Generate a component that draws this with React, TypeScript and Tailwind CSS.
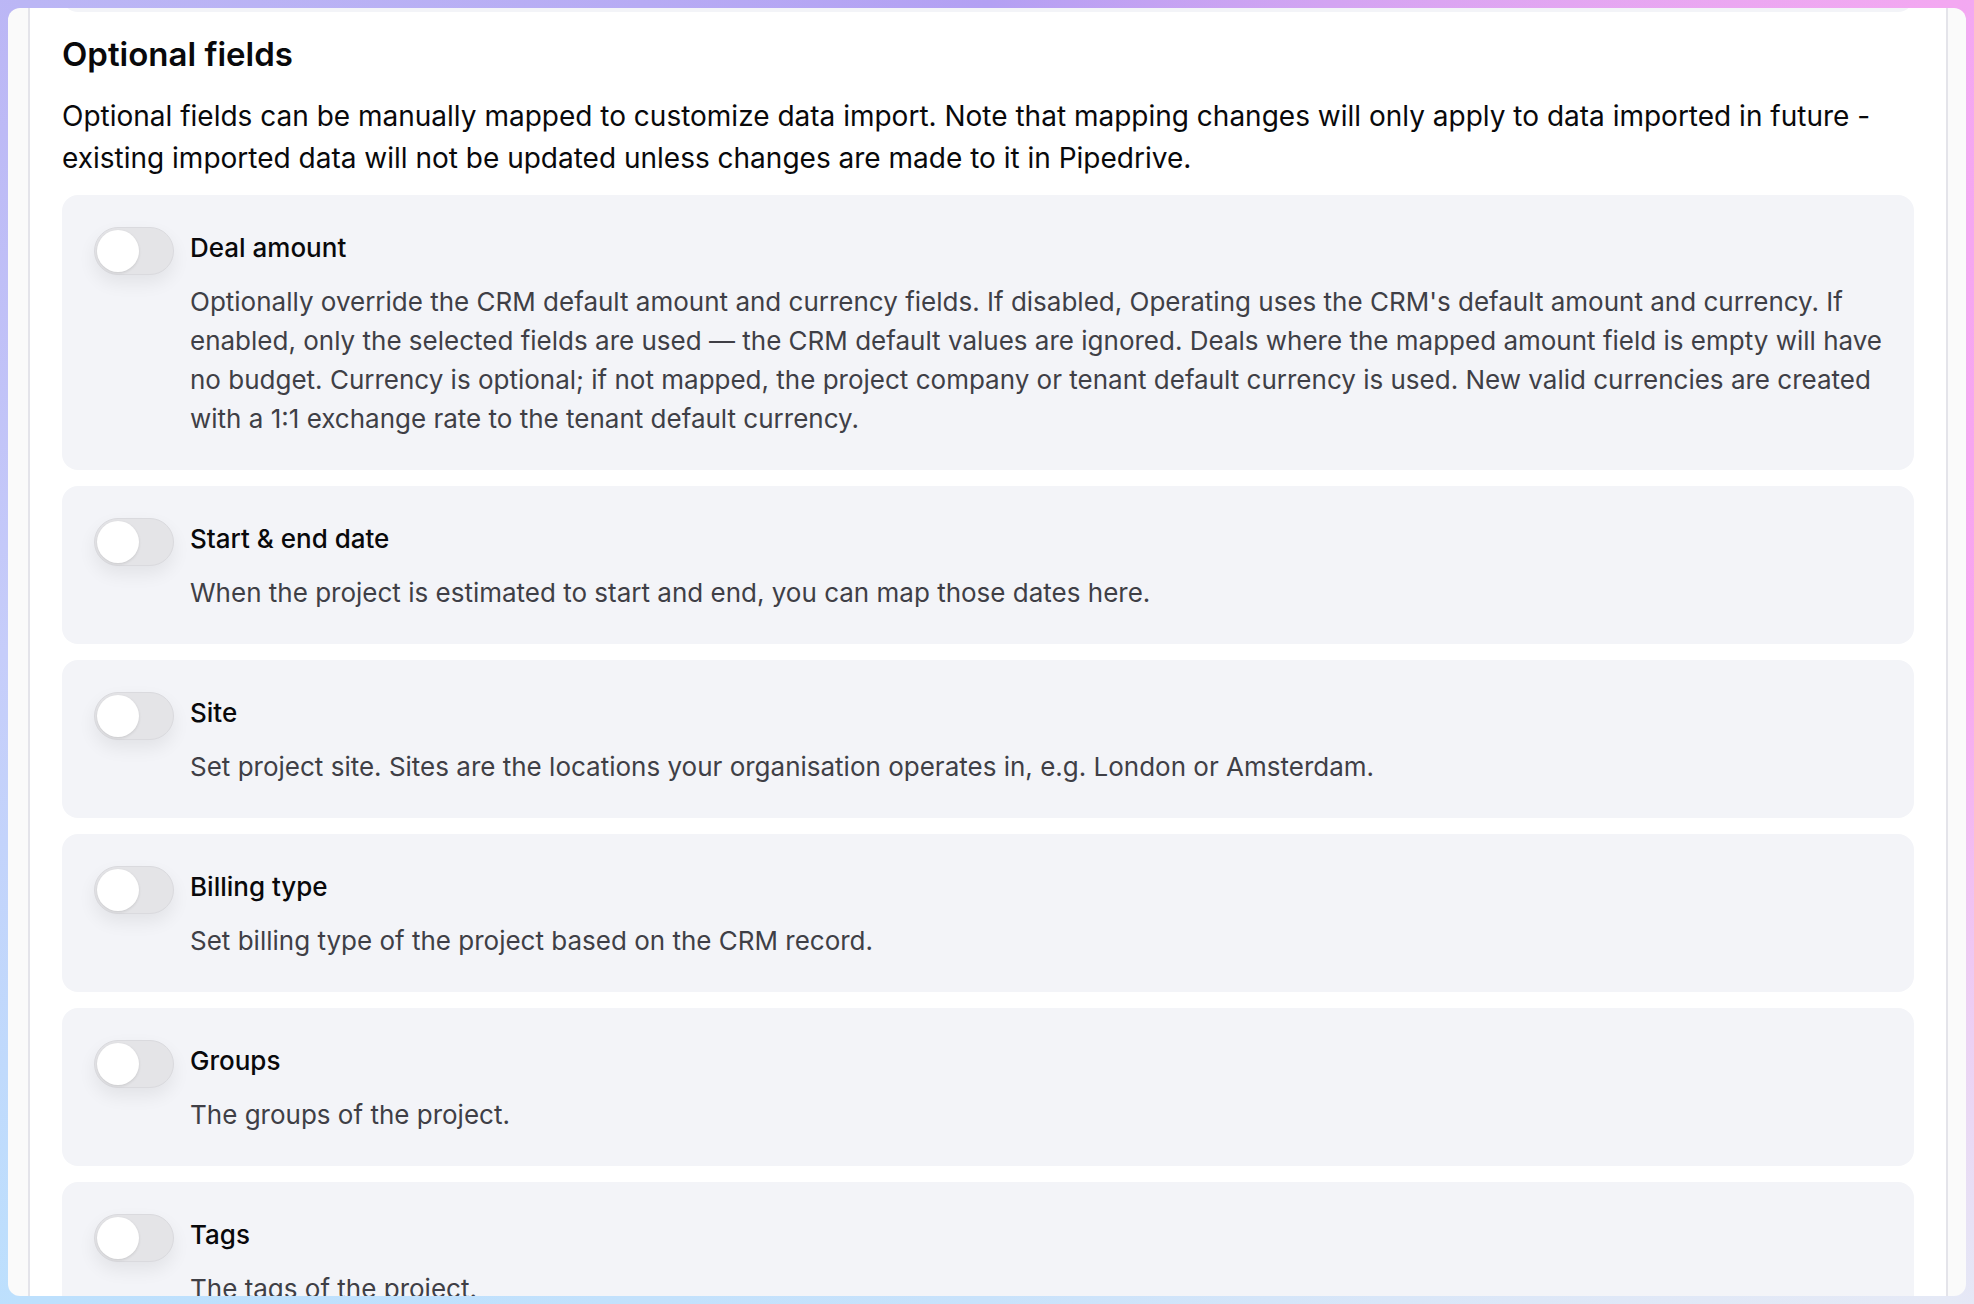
import React from 'react';

interface Field {
  title: string;
  description: string;
}

const fields: Field[] = [
  {
    title: 'Deal amount',
    description:
      "Optionally override the CRM default amount and currency fields. If disabled, Operating uses the CRM's default amount and currency. If enabled, only the selected fields are used — the CRM default values are ignored. Deals where the mapped amount field is empty will have no budget. Currency is optional; if not mapped, the project company or tenant default currency is used. New valid currencies are created with a 1:1 exchange rate to the tenant default currency.",
  },
  {
    title: 'Start & end date',
    description: 'When the project is estimated to start and end, you can map those dates here.',
  },
  {
    title: 'Site',
    description: 'Set project site. Sites are the locations your organisation operates in, e.g. London or Amsterdam.',
  },
  {
    title: 'Billing type',
    description: 'Set billing type of the project based on the CRM record.',
  },
  {
    title: 'Groups',
    description: 'The groups of the project.',
  },
  {
    title: 'Tags',
    description: 'The tags of the project.',
  },
];

function Toggle() {
  return (
    <button
      type="button"
      role="switch"
      aria-checked={false}
      className="relative w-[80px] h-[48px] shrink-0 rounded-full bg-[#e4e4e7] border border-[#dadade] shadow-[0_8px_18px_rgba(0,0,0,0.07)] outline-none"
    >
      <span className="absolute left-[2px] top-[2px] w-[42px] h-[42px] rounded-full bg-white shadow-[0_1px_3px_rgba(0,0,0,0.12)]" />
    </button>
  );
}

function FieldCard({ field }: { field: Field }) {
  return (
    <div className="flex items-start gap-4 rounded-[16px] bg-[#f3f4f8] p-8">
      <Toggle />
      <div className="flex-1 min-w-0 pt-[1px]">
        <h3 className="text-[26px] leading-[40px] font-medium text-[#09090b]">{field.title}</h3>
        <p className="mt-[14px] text-[26px] leading-[39px] text-[#3f3f46]">{field.description}</p>
      </div>
    </div>
  );
}

export default function App() {
  return (
    <div
      className="w-full h-[1304px] p-2 overflow-hidden bg-[conic-gradient(from_0deg_at_50%_50%,#b3a0f3_0deg,#f3a8f1_56deg,#f8a5ee_90deg,#e5e9f6_124deg,#c8e2fb_180deg,#bde0fd_236deg,#c6cdfa_270deg,#bbb6f5_304deg,#b3a0f3_360deg)]"
      style={{ fontFamily: 'Inter, "Noto Sans", sans-serif' }}
    >
      <div className="flex h-full rounded-[12px] bg-[#fafafa] pl-5 pr-[18px] overflow-hidden">
        <div className="flex-1 min-w-0 overflow-hidden border-x-2 border-[#e4e4ea] bg-white px-8">
          {/* bottom of the previous card, scrolled out of view */}
          <div className="-mt-[60px] h-[64px] rounded-[16px] bg-[#f3f4f8]" />

          <h2 className="mt-[18px] text-[33px] leading-[48px] font-semibold text-[#09090b]">Optional fields</h2>
          <p className="mt-[17px] text-[28px] leading-[42px] text-[#09090b]">
            Optional fields can be manually mapped to customize data import. Note that mapping changes will only apply
            to data imported in future - existing imported data will not be updated unless changes are made to it in
            Pipedrive.
          </p>

          <div className="mt-4 flex flex-col gap-4">
            {fields.map((field) => (
              <FieldCard key={field.title} field={field} />
            ))}
          </div>
        </div>
      </div>
    </div>
  );
}
